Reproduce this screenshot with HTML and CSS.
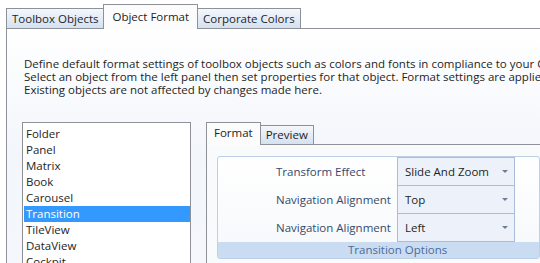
FILE: index.html
```html
<!DOCTYPE html>
<html lang="en">
<head>
    <meta charset="UTF-8">
    <title>Object Format</title>
    <link rel="stylesheet" href="styles.css">
</head>
<body>
    <div class="tabstrip">
        <div class="tab">Toolbox Objects</div>
        <div class="tab active">Object Format</div>
        <div class="tab">Corporate Colors</div>
    </div>
    <div class="panel">
        <p class="intro">
            Define default format settings of toolbox objects such as colors and fonts in compliance to your C<br>
            Select an object from the left panel then set properties for that object. Format settings are appliec<br>
            Existing objects are not affected by changes made here.
        </p>
        <div class="workarea">
            <ul class="listbox">
                <li>Folder</li>
                <li>Panel</li>
                <li>Matrix</li>
                <li>Book</li>
                <li>Carousel</li>
                <li class="selected">Transition</li>
                <li>TileView</li>
                <li>DataView</li>
                <li>Cockpit</li>
            </ul>
            <div class="subtabs">
                <div class="subtabstrip">
                    <div class="subtab active">Format</div>
                    <div class="subtab">Preview</div>
                </div>
                <div class="subpanel">
                    <div class="group">
                        <div class="rows">
                            <div class="row">
                                <span class="label">Transform Effect</span>
                                <div class="combo">Slide And Zoom<span class="arrow"></span></div>
                            </div>
                            <div class="row">
                                <span class="label">Navigation Alignment</span>
                                <div class="combo">Top<span class="arrow"></span></div>
                            </div>
                            <div class="row">
                                <span class="label">Navigation Alignment</span>
                                <div class="combo">Left<span class="arrow"></span></div>
                            </div>
                        </div>
                        <div class="group-title">Transition Options</div>
                    </div>
                </div>
            </div>
        </div>
    </div>
</body>
</html>
```

FILE: styles.css
```css
/* Windows style settings dialog */
html, body {
    margin: 0;
    height: 100%;
    overflow: hidden;
}
body {
    font-family: 'Segoe UI', 'Open Sans', 'Noto Sans', sans-serif;
    font-size: 11.5px;
    color: #1e1e1e;
    background-color: #ffffff;
}
.tabstrip {
    display: flex;
    align-items: flex-end;
    padding: 4px 0 0 6px;
    height: 24px;
}
.tab {
    height: 19px;
    line-height: 19px;
    padding: 0 5px;
    border: 1px solid #8e9197;
    border-bottom: none;
    background: linear-gradient(#f4f7fb, #d5e1f1);
    margin-right: -1px;
    white-space: nowrap;
}
.tab.active {
    height: 24px;
    line-height: 24px;
    padding: 0 8px;
    background: #fcfcfc;
    position: relative;
    z-index: 1;
    margin-bottom: -1px;
}
.panel {
    margin-left: 6px;
    border-top: 1px solid #8e9197;
    border-left: 1px solid #8e9197;
    background: linear-gradient(#ffffff, #f3f6fb 40%, #f5f7fb);
    height: 300px;
    overflow: hidden;
}
.intro {
    margin: 0;
    padding: 28px 0 0 17px;
    line-height: 13px;
    white-space: nowrap;
}
.workarea {
    display: flex;
    align-items: flex-start;
    padding: 26px 0 0 15px;
}
.listbox {
    list-style: none;
    margin: 0;
    padding: 3px 0 0 1px;
    width: 166px;
    height: 200px;
    border: 1px solid #8e9197;
    background-color: #ffffff;
}
.listbox li {
    height: 16px;
    line-height: 16px;
    padding-left: 2px;
}
.listbox li.selected {
    background-color: #3399ff;
    color: #ffffff;
}
.subtabs {
    margin-left: 15px;
    flex: 1;
}
.subtabstrip {
    display: flex;
    align-items: flex-end;
    height: 22px;
}
.subtab {
    height: 18px;
    line-height: 18px;
    padding: 0 5px;
    border: 1px solid #8e9197;
    border-bottom: none;
    background: linear-gradient(#f4f7fb, #d5e1f1);
}
.subtab.active {
    height: 22px;
    line-height: 20px;
    padding: 0 7px;
    background: #fcfcfc;
    margin-right: -1px;
    margin-bottom: -1px;
    position: relative;
    z-index: 1;
}
.subpanel {
    border-top: 1px solid #8e9197;
    border-left: 1px solid #8e9197;
    background-color: #f9fafc;
    padding: 11px 0 0 10px;
    height: 200px;
}
.group {
    border: 1px solid #bcd0e6;
    border-radius: 3px;
    background: linear-gradient(#ffffff, #f6f8fb);
}
.rows {
    padding-left: 58px;
}
.row {
    display: flex;
    align-items: center;
    margin-top: -1px;
}
.row:first-child {
    margin-top: 0;
}
.label {
    width: 121px;
    color: #334a6e;
    white-space: nowrap;
}
.combo {
    position: relative;
    width: 109px;
    height: 27px;
    line-height: 27px;
    padding-left: 7px;
    border: 1px solid #a8bed8;
    background-color: #edf2fa;
}
.arrow {
    position: absolute;
    right: 6px;
    top: 12px;
    border-left: 3px solid transparent;
    border-right: 3px solid transparent;
    border-top: 3px solid #6d7e96;
}
.group-title {
    height: 16px;
    line-height: 16px;
    padding-left: 130px;
    background-color: #c9dcf1;
    color: #4c6b99;
}
```
